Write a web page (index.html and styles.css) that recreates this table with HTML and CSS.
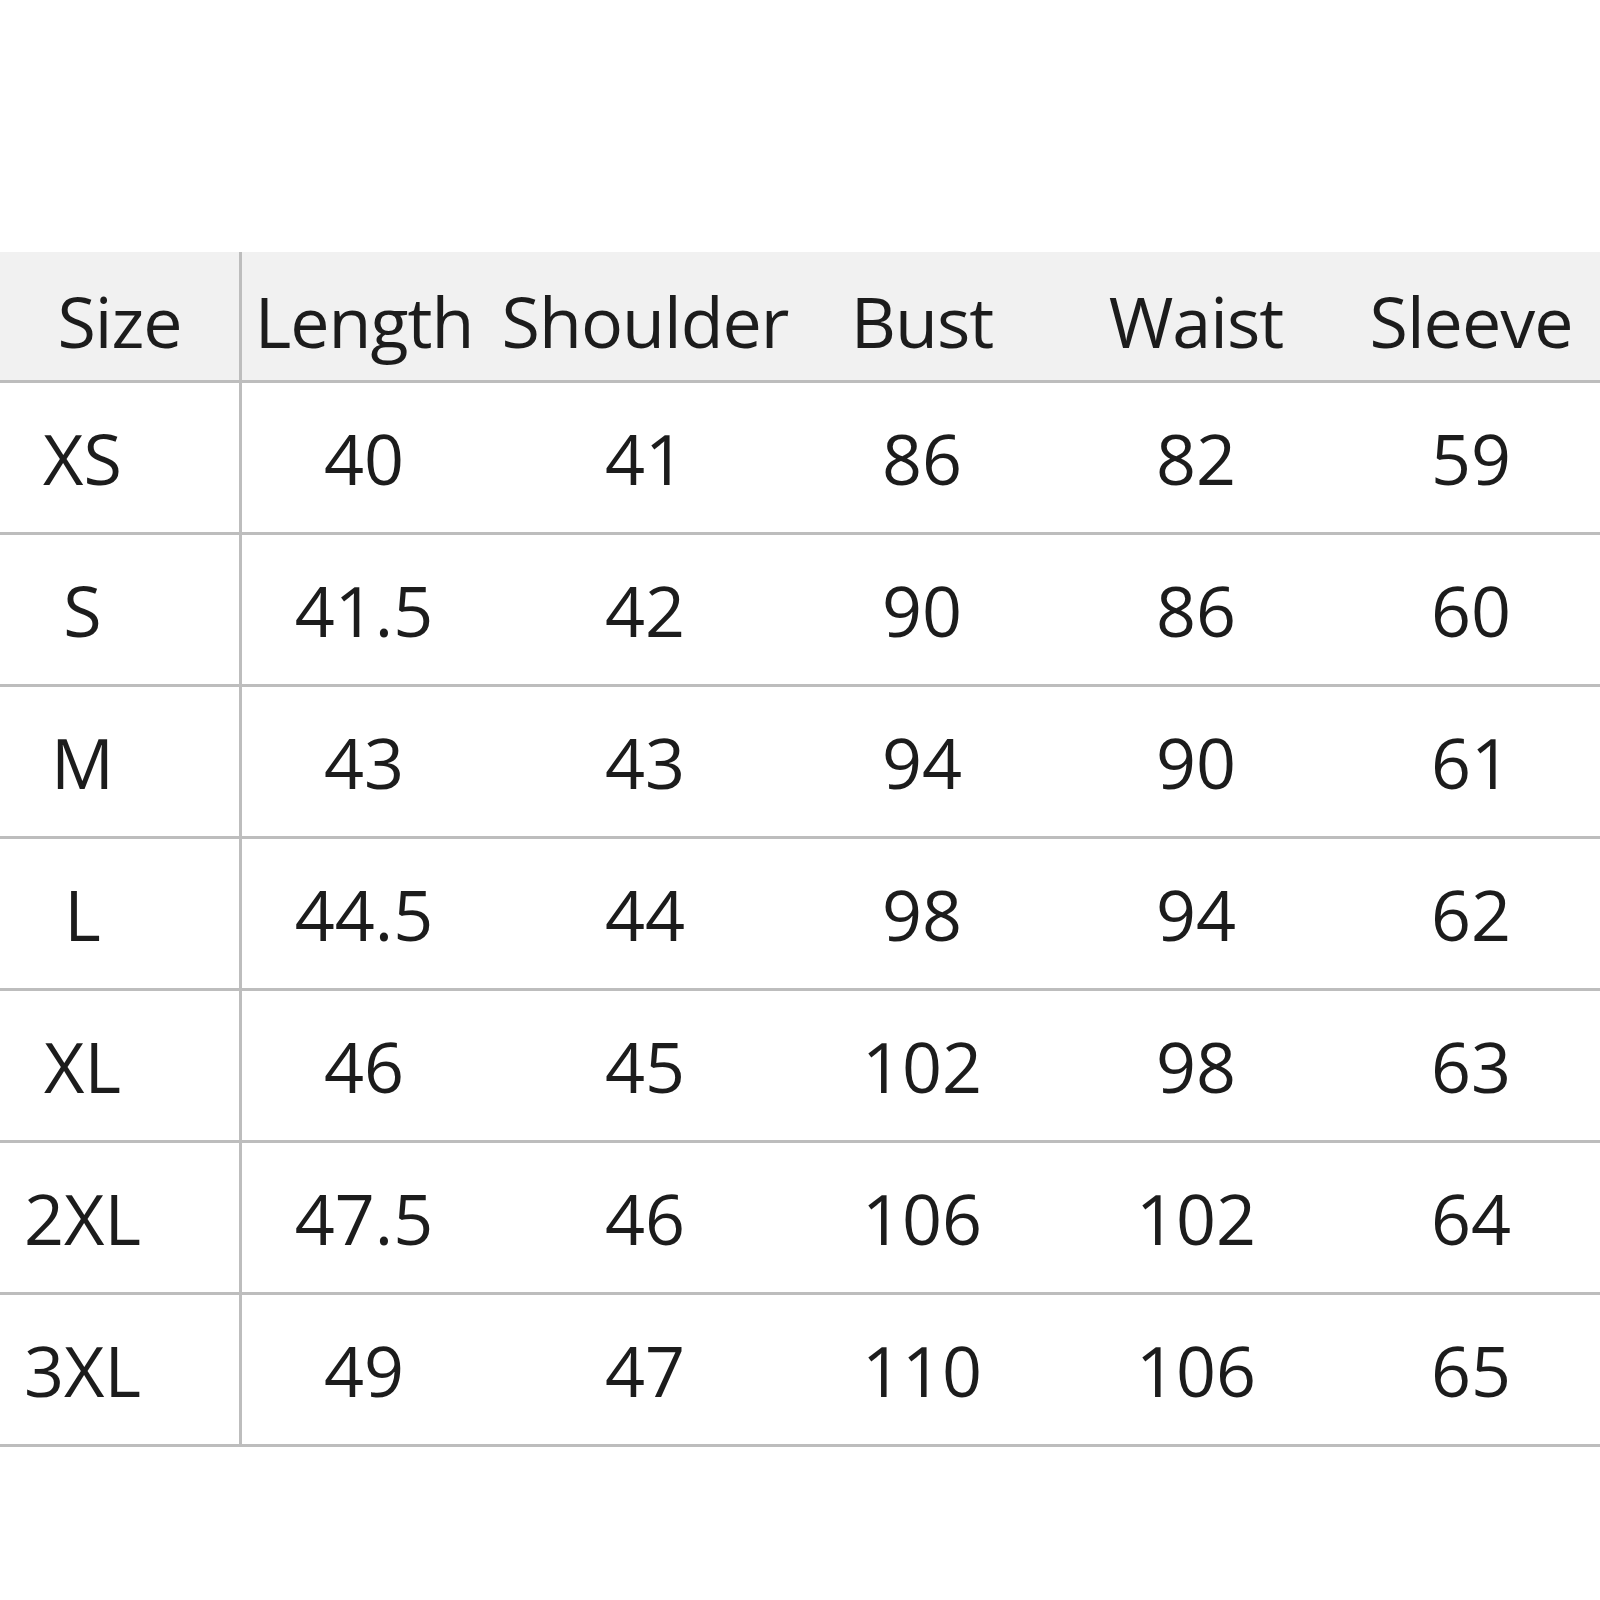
FILE: index.html
```html
<!DOCTYPE html>
<html>
<head>
<meta charset="utf-8">
<link rel="stylesheet" href="styles.css">
</head>
<body>
<div class="table">
  <div class="row head">
    <div class="cell size">Size</div>
    <div class="cell">Length</div>
    <div class="cell">Shoulder</div>
    <div class="cell">Bust</div>
    <div class="cell">Waist</div>
    <div class="cell">Sleeve</div>
  </div>
  <div class="row"><div class="cell size">XS</div><div class="cell">40</div><div class="cell">41</div><div class="cell">86</div><div class="cell">82</div><div class="cell">59</div></div>
  <div class="row"><div class="cell size">S</div><div class="cell">41.5</div><div class="cell">42</div><div class="cell">90</div><div class="cell">86</div><div class="cell">60</div></div>
  <div class="row"><div class="cell size">M</div><div class="cell">43</div><div class="cell">43</div><div class="cell">94</div><div class="cell">90</div><div class="cell">61</div></div>
  <div class="row"><div class="cell size">L</div><div class="cell">44.5</div><div class="cell">44</div><div class="cell">98</div><div class="cell">94</div><div class="cell">62</div></div>
  <div class="row"><div class="cell size">XL</div><div class="cell">46</div><div class="cell">45</div><div class="cell">102</div><div class="cell">98</div><div class="cell">63</div></div>
  <div class="row"><div class="cell size">2XL</div><div class="cell">47.5</div><div class="cell">46</div><div class="cell">106</div><div class="cell">102</div><div class="cell">64</div></div>
  <div class="row"><div class="cell size">3XL</div><div class="cell">49</div><div class="cell">47</div><div class="cell">110</div><div class="cell">106</div><div class="cell">65</div></div>
</div>
</body>
</html>
```
FILE: styles.css
```css
html, body {
  margin: 0;
  padding: 0;
  background: #ffffff;
}
body {
  font-family: "Open Sans", "Noto Sans", sans-serif;
  color: #1c1c1c;
}
.table {
  margin-top: 252px;
  width: 1600px;
}
.row {
  display: grid;
  grid-template-columns: 242px 244px 318px 236px 312px 1fr;
  height: 149px;
  border-bottom: 3px solid #bdbdbd;
}
.row.head {
  height: 128px;
  background: #f1f1f1;
}
.cell {
  display: flex;
  align-items: center;
  justify-content: center;
  font-size: 70px;
  font-weight: 500;
  line-height: 1;
}
.row.head .cell {
  padding-top: 10px;
  letter-spacing: -1px;
}
.cell.size {
  border-right: 3px solid #bdbdbd;
  padding-right: 74px;
}
.row.head .cell.size {
  padding-right: 0;
}
.cell:last-child {
  padding-right: 10px;
}
```
